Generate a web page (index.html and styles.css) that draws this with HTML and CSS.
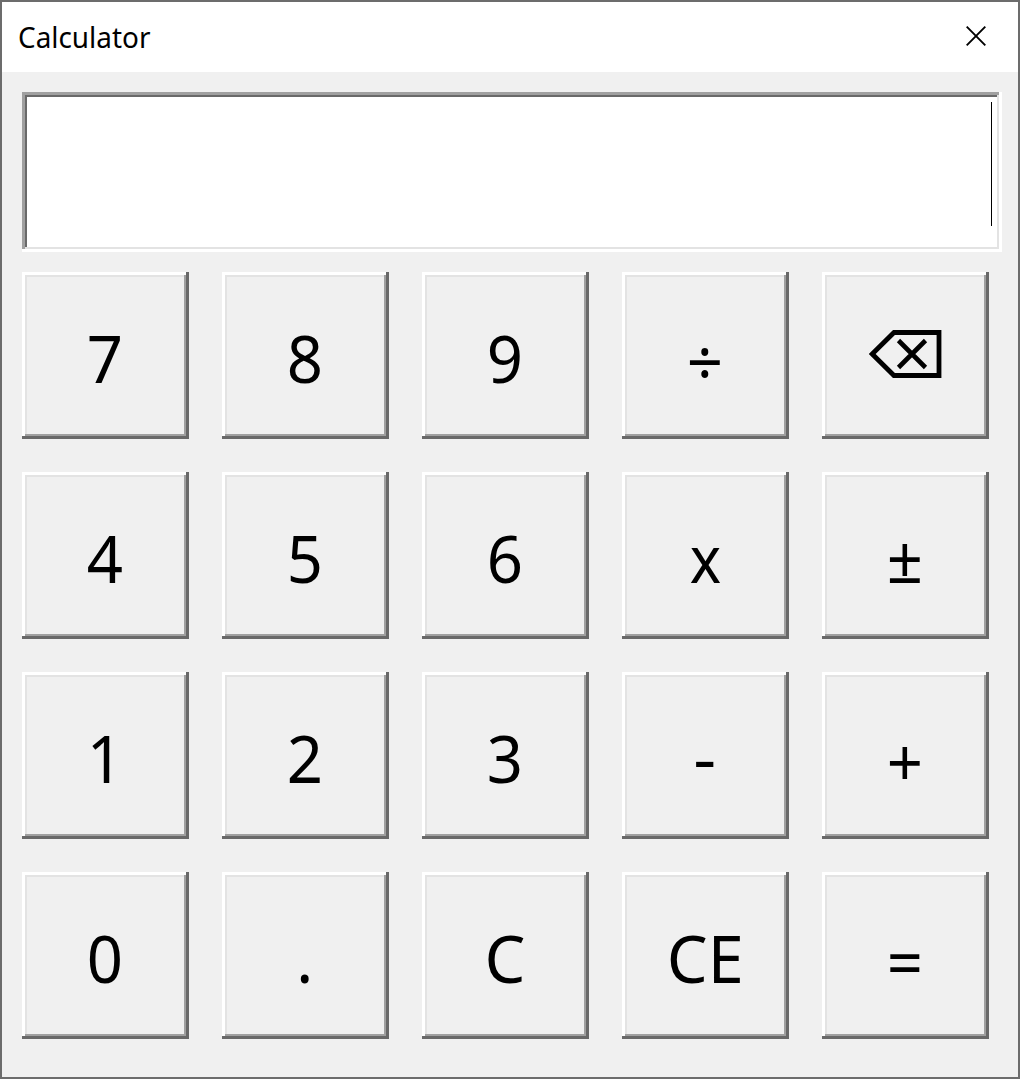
FILE: index.html
```html
<!DOCTYPE html>
<html lang="en">
<head>
<meta charset="utf-8">
<title>Calculator</title>
<link rel="stylesheet" href="styles.css">
</head>
<body>
<main class="window">
  <header class="titlebar">
    <h1 class="title">Calculator</h1>
    <button class="close" aria-label="Close">
      <svg width="20" height="20" viewBox="0 0 20 20"><path d="M.7.7 19.3 19.3M19.3.7.7 19.3" fill="none" stroke="#000" stroke-width="1.9"/></svg>
    </button>
  </header>
  <div class="display"><span class="caret"></span></div>
  <div class="keys">
    <button class="key"><span class="label">7</span></button>
    <button class="key"><span class="label">8</span></button>
    <button class="key"><span class="label">9</span></button>
    <button class="key"><span class="label op">÷</span></button>
    <button class="key erase" aria-label="Backspace">
      <svg width="73" height="48" viewBox="0 0 73 48"><path d="M3.2 24 25 2.5H70V45.500H25Z" fill="none" stroke="#000" stroke-width="4.800"/><path d="M29.500 10.500 56.500 37.500M56.500 10.500 29.500 37.500" fill="none" stroke="#000" stroke-width="4.600"/></svg>
    </button>
    <button class="key"><span class="label">4</span></button>
    <button class="key"><span class="label">5</span></button>
    <button class="key"><span class="label">6</span></button>
    <button class="key"><span class="label times">x</span></button>
    <button class="key"><span class="label">±</span></button>
    <button class="key"><span class="label">1</span></button>
    <button class="key"><span class="label">2</span></button>
    <button class="key"><span class="label">3</span></button>
    <button class="key"><span class="label minus">-</span></button>
    <button class="key"><span class="label op">+</span></button>
    <button class="key"><span class="label">0</span></button>
    <button class="key"><span class="label">.</span></button>
    <button class="key"><span class="label letter">C</span></button>
    <button class="key"><span class="label letter">CE</span></button>
    <button class="key"><span class="label op">=</span></button>
  </div>
</main>
</body>
</html>
```
FILE: styles.css
```css
* { box-sizing: border-box; }
body { margin: 0; font-family: "Noto Sans", sans-serif; color: #000; }
button { border: 0; padding: 0; background: none; font: inherit; color: inherit; }
svg { display: block; }

.window {
  width: 1020px;
  height: 1079px;
  border: 2px solid #6c6c6c;
  background: #f0f0f0;
  overflow: hidden;
}
.titlebar {
  display: flex;
  justify-content: space-between;
  height: 70px;
  padding: 0 32px 0 16px;
  background: #fff;
}
.title {
  margin: 0;
  font-size: 29px;
  font-weight: 400;
  line-height: 70px;
  transform: scaleX(.962);
  transform-origin: left;
}
.close { height: 68px; }

.display {
  display: flex;
  justify-content: flex-end;
  width: 980px;
  height: 160px;
  margin: 20px 0 0 20px;
  padding: 10px 10px 0 0;
  background: #fff;
  box-shadow: inset -3px -3px #fff, inset 3px 3px #a0a0a0,
    inset -5px -5px #e3e3e3, inset 5px 5px #696969;
}
.caret { width: 1px; height: 124px; background: #000; }

.keys {
  display: grid;
  grid-template-columns: repeat(5, 167px);
  grid-auto-rows: 167px;
  gap: 33px;
  margin: 20px 0 0 20px;
}
.key {
  display: flex;
  align-items: center;
  justify-content: center;
  padding-right: 1px;
  font-size: 66px;
  line-height: 90px;
  box-shadow: inset -3px -3px #696969, inset 3px 3px #fff,
    inset -5px -5px #a0a0a0, inset 5px 5px #e3e3e3;
}
.label { padding-top: 3px; transform: scaleX(.96); }
.op { padding-top: 9px; }
.times { transform: scaleX(.9); }
.minus { padding: 0; transform: scaleX(1.08); }
.letter { transform: scaleX(.98); }
.erase { padding: 0 0 3px; }
```
